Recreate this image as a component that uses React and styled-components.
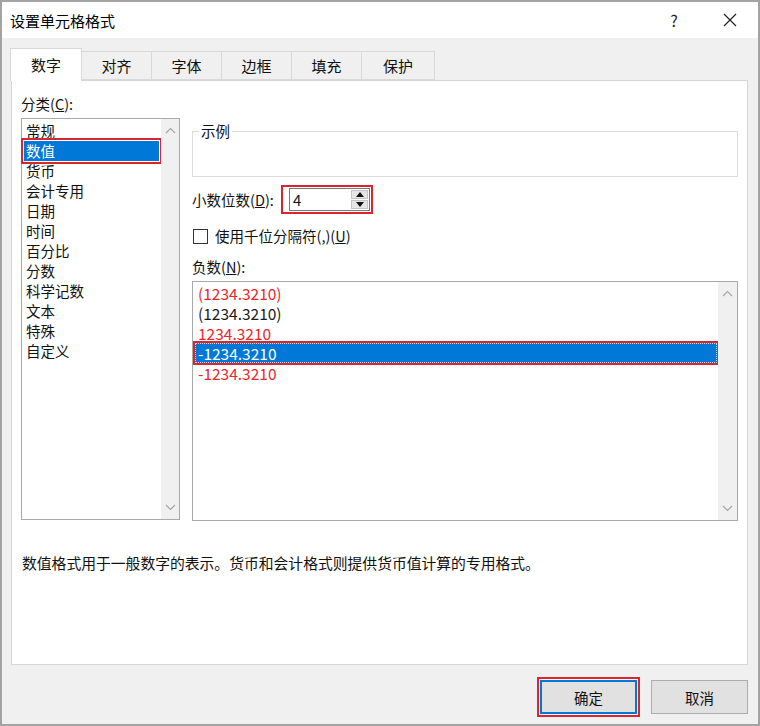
import React from "react";
import styled, { createGlobalStyle } from "styled-components";

const Global = createGlobalStyle`
  html, body { margin: 0; padding: 0; background: #fff; }
  body { font-family: "Noto Sans CJK SC", "Noto Sans", sans-serif; }
  * { box-sizing: border-box; }
`;

const Window = styled.div`
  width: 760px;
  height: 726px;
  border: 2px solid #a3a3a3;
  background: #f0f0f0;
  display: flex;
  flex-direction: column;
  color: #111;
  font-size: 14.5px;
`;

const TitleBar = styled.div`
  height: 36px;
  flex-shrink: 0;
  background: #fff;
  display: flex;
  align-items: center;
  padding-left: 8px;
`;

const Title = styled.div`
  flex: 1;
  font-size: 15px;
  color: #000;
`;

const TitleButton = styled.div`
  width: 56px;
  height: 36px;
  display: flex;
  align-items: center;
  justify-content: center;
  font-size: 16px;
  color: #222;
`;

const Body = styled.div`
  flex: 1;
  display: flex;
  flex-direction: column;
  padding: 10px 10px 0 9px;
`;

const Tabs = styled.div`
  display: flex;
  align-items: flex-end;
  height: 32px;
`;

const Tab = styled.div`
  width: ${(p) => p.$w}px;
  height: ${(p) => (p.$active ? 33 : 29)}px;
  margin-left: -1px;
  margin-bottom: ${(p) => (p.$active ? -1 : 0)}px;
  position: relative;
  z-index: ${(p) => (p.$active ? 2 : 1)};
  background: ${(p) => (p.$active ? "#fff" : "#f0f0f0")};
  border: 1px solid #d9d9d9;
  border-bottom: ${(p) => (p.$active ? "none" : "1px solid #d9d9d9")};
  display: flex;
  align-items: center;
  justify-content: center;
  font-size: 15px;
  padding-bottom: ${(p) => (p.$active ? 2 : 0)}px;
  color: #111;
`;

const Panel = styled.div`
  height: 585px;
  flex-shrink: 0;
  background: #fff;
  border: 1px solid #d6d6d6;
  padding: 13px 9px 0 9px;
`;

const Columns = styled.div`
  display: grid;
  grid-template-columns: 159px 546px;
  column-gap: 12px;
  align-items: start;
`;

const Column = styled.div`
  display: flex;
  flex-direction: column;
`;

const Label = styled.div`
  height: 20px;
  line-height: 20px;
  white-space: nowrap;
  margin-top: ${(p) => p.$mt || 0}px;
  width: ${(p) => (p.$w ? p.$w + "px" : "auto")};
  flex-shrink: 0;
`;

const ListBox = styled.div`
  height: ${(p) => p.$h}px;
  margin-top: ${(p) => p.$mt || 0}px;
  border: 1px solid #a9a9a9;
  background: #fff;
  display: flex;
`;

const Items = styled.div`
  flex: 1;
  display: flex;
  flex-direction: column;
  padding-top: ${(p) => p.$pt}px;
`;

const CatItem = styled.div`
  height: 20px;
  line-height: 20px;
  margin: 0 2px;
  padding-left: 2px;
  background: ${(p) => (p.$sel ? "#0078d7" : "transparent")};
  color: ${(p) => (p.$sel ? "#fff" : "#111")};
  outline: ${(p) => (p.$mark ? "2px solid #d9262e" : "none")};
  outline-offset: 1px;
`;

const NumItem = styled.div`
  height: 20px;
  line-height: 18px;
  margin: 0 1px 0 2px;
  padding-left: 2px;
  font-size: 15.5px;
  border: 1px dotted ${(p) => (p.$sel ? "rgba(255,255,255,0.75)" : "transparent")};
  background: ${(p) => (p.$sel ? "#0078d7" : "transparent")};
  color: ${(p) => (p.$sel ? "#fff" : p.$red ? "#e8262d" : "#1a1a1a")};
  outline: ${(p) => (p.$mark ? "2px solid #d9262e" : "none")};
  outline-offset: 0px;
`;

const ScrollBar = styled.div`
  width: ${(p) => p.$w}px;
  background: #f0f0f0;
  display: flex;
  flex-direction: column;
  justify-content: space-between;
  align-items: center;
  padding: 8px 0 8px;
`;

const Sample = styled.fieldset`
  margin: 27px 0 0 0;
  padding: 0 6px;
  height: 56px;
  min-width: 0;
  border: 1px solid #dcdcdc;
  legend {
    padding: 0 2px;
    line-height: 20px;
    font-size: 14.5px;
  }
`;

const Row = styled.div`
  display: flex;
  align-items: center;
  margin-top: ${(p) => p.$mt}px;
  height: ${(p) => p.$h}px;
`;

const SpinMark = styled.div`
  border: 2px solid #d9262e;
  padding: 1px 1px 1px 6px;
  height: 29px;
  display: flex;
`;

const SpinInput = styled.div`
  width: 81px;
  height: 23px;
  border: 1px solid #7a7a7a;
  display: flex;
  background: #fff;
`;

const SpinValue = styled.div`
  flex: 1;
  line-height: 21px;
  padding-left: 3px;
  font-size: 15px;
`;

const SpinButtons = styled.div`
  width: 18px;
  display: flex;
  flex-direction: column;
  gap: 1px;
  padding: 1px 1px 1px 0;
`;

const SpinBtn = styled.div`
  flex: 1;
  background: #e6e6e6;
  border: 1px solid #c4c4c4;
  display: flex;
  align-items: center;
  justify-content: center;
`;

const CheckBox = styled.div`
  width: 15px;
  height: 15px;
  border: 1px solid #333;
  background: #fff;
  margin: 0 7px 0 1px;
`;

const Description = styled.div`
  margin-top: 32px;
  height: 20px;
  line-height: 20px;
  padding-left: 1px;
  font-size: 14.8px;
`;

const Footer = styled.div`
  display: flex;
  justify-content: flex-end;
  gap: 14px;
  padding-top: 15px;
`;

const Button = styled.div`
  width: 97px;
  height: 34px;
  display: flex;
  align-items: center;
  justify-content: center;
  background: #e1e1e1;
  border: ${(p) => (p.$default ? "2px solid #0078d7" : "1px solid #adadad")};
  outline: ${(p) => (p.$mark ? "2px solid #d9262e" : "none")};
  outline-offset: 1px;
  font-size: 14.5px;
`;

const Chevron = ({ up }) => (
  <svg width="11" height="7" viewBox="0 0 11 7">
    <polyline
      points={up ? "1,6 5.5,1.5 10,6" : "1,1 5.5,5.5 10,1"}
      fill="none"
      stroke="#a6a6a6"
      strokeWidth="1.2"
    />
  </svg>
);

const Tri = ({ up }) => (
  <svg width="8" height="5" viewBox="0 0 8 5">
    <polygon points={up ? "0,5 4,0 8,5" : "0,0 8,0 4,5"} fill="#111" />
  </svg>
);

const categories = ["常规", "数值", "货币", "会计专用", "日期", "时间", "百分比", "分数", "科学记数", "文本", "特殊", "自定义"];

const negatives = [
  { t: "(1234.3210)", red: true },
  { t: "(1234.3210)", red: false },
  { t: "1234.3210", red: true },
  { t: "-1234.3210", red: false, sel: true },
  { t: "-1234.3210", red: true },
];

const tabs = [
  { t: "数字", w: 72, active: true },
  { t: "对齐", w: 71 },
  { t: "字体", w: 71 },
  { t: "边框", w: 71 },
  { t: "填充", w: 71 },
  { t: "保护", w: 74 },
];

export default function App() {
  return (
    <>
      <Global />
      <Window>
        <TitleBar>
          <Title>设置单元格格式</Title>
          <TitleButton>?</TitleButton>
          <TitleButton>
            <svg width="14" height="14" viewBox="0 0 14 14">
              <path d="M1 1 L13 13 M13 1 L1 13" stroke="#222" strokeWidth="1.2" fill="none" />
            </svg>
          </TitleButton>
        </TitleBar>
        <Body>
          <Tabs>
            {tabs.map((t) => (
              <Tab key={t.t} $w={t.w} $active={t.active}>
                {t.t}
              </Tab>
            ))}
          </Tabs>
          <Panel>
            <Columns>
              <Column>
                <Label>
                  分类(<u>C</u>):
                </Label>
                <ListBox $h={402} $mt={4}>
                  <Items $pt={2}>
                    {categories.map((c, i) => (
                      <CatItem key={c} $sel={i === 1} $mark={i === 1}>
                        {c}
                      </CatItem>
                    ))}
                  </Items>
                  <ScrollBar $w={18}>
                    <Chevron up />
                    <Chevron />
                  </ScrollBar>
                </ListBox>
              </Column>
              <Column>
                <Sample>
                  <legend>示例</legend>
                </Sample>
                <Row $mt={8} $h={29}>
                  <Label $w={89}>
                    小数位数(<u>D</u>):
                  </Label>
                  <SpinMark>
                    <SpinInput>
                      <SpinValue>4</SpinValue>
                      <SpinButtons>
                        <SpinBtn>
                          <Tri up />
                        </SpinBtn>
                        <SpinBtn>
                          <Tri />
                        </SpinBtn>
                      </SpinButtons>
                    </SpinInput>
                  </SpinMark>
                </Row>
                <Row $mt={12} $h={20}>
                  <CheckBox />
                  <Label>
                    使用千位分隔符(,)(<u>U</u>)
                  </Label>
                </Row>
                <Label $mt={11}>
                  负数(<u>N</u>):
                </Label>
                <ListBox $h={240} $mt={4}>
                  <Items $pt={1}>
                    {negatives.map((n, i) => (
                      <NumItem key={i} $red={n.red} $sel={n.sel} $mark={n.sel}>
                        {n.t}
                      </NumItem>
                    ))}
                  </Items>
                  <ScrollBar $w={19}>
                    <Chevron up />
                    <Chevron />
                  </ScrollBar>
                </ListBox>
              </Column>
            </Columns>
            <Description>
              数值格式用于一般数字的表示。货币和会计格式则提供货币值计算的专用格式。
            </Description>
          </Panel>
          <Footer>
            <Button $default $mark>
              确定
            </Button>
            <Button>取消</Button>
          </Footer>
        </Body>
      </Window>
    </>
  );
}
